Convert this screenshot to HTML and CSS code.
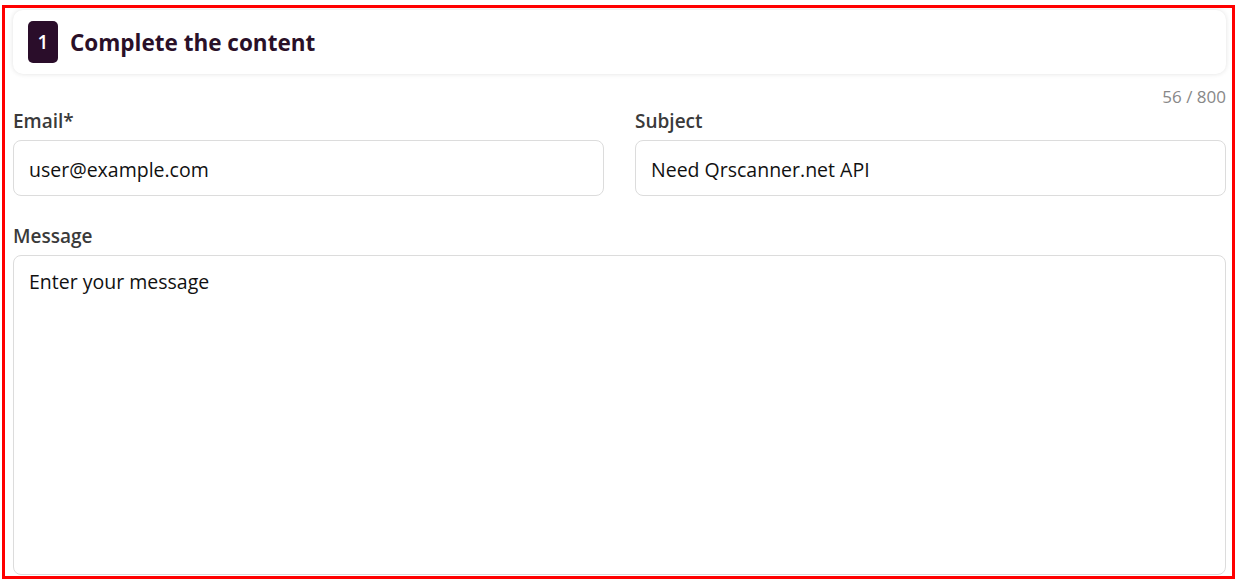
FILE: index.html
```html
<!DOCTYPE html>
<html lang="en">
<head>
  <meta charset="UTF-8">
  <title>Contact</title>
  <meta name="viewport" content="width=device-width, initial-scale=1">
  <link rel="stylesheet" href="styles.css">
</head>
<body>
  <div class="frame">
    <div class="step-card">
      <span class="step-num">1</span>
      <h2>Complete the content</h2>
    </div>
    <div class="counter">56 / 800</div>
    <div class="row">
      <div class="field">
        <label for="email">Email*</label>
        <input type="text" id="email" value="user@example.com">
      </div>
      <div class="field">
        <label for="subject">Subject</label>
        <input type="text" id="subject" value="Need Qrscanner.net API">
      </div>
    </div>
    <div class="field">
      <label for="message">Message</label>
      <textarea id="message" placeholder="Enter your message"></textarea>
    </div>
  </div>
</body>
</html>
```

FILE: styles.css
```css
* {
  box-sizing: border-box;
  font-family: 'Open Sans', sans-serif;
}
body {
  margin: 0;
  background: #fff;
  color: #333;
}
.frame {
  margin: 5px 2px 0 2px;
  height: 574px;
  border: 3px solid #ff0000;
  padding: 2px 6px 0 8px;
  overflow: hidden;
}
.step-card {
  display: flex;
  align-items: center;
  gap: 12px;
  height: 64px;
  padding: 0 15px;
  background: #fff;
  border-radius: 10px;
  box-shadow: 0 0 5px rgba(0, 0, 0, 0.12);
}
.step-num {
  display: flex;
  align-items: center;
  justify-content: center;
  width: 30px;
  height: 42px;
  border-radius: 5px;
  background: #2a0d2a;
  color: #fff;
  font-size: 19px;
  font-weight: 600;
}
h2 {
  margin: 0;
  font-size: 22.5px;
  font-weight: 700;
  color: #2a1028;
}
.counter {
  text-align: right;
  margin-top: 10px;
  font-size: 17px;
  line-height: 25px;
  color: #888;
}
.row {
  display: grid;
  grid-template-columns: 1fr 1fr;
  gap: 31px;
}
.field {
  display: flex;
  flex-direction: column;
}
label {
  font-size: 19px;
  font-weight: 600;
  line-height: 24px;
  color: #3a3a3a;
  margin-bottom: 7px;
}
input, textarea {
  width: 100%;
  border: 1px solid #dcdcdc;
  border-radius: 8px;
  padding: 3px 15px 0;
  font-size: 19.5px;
  color: #111;
  background: #fff;
  outline: none;
}
input {
  height: 56px;
  margin-bottom: 28px;
}
textarea {
  height: 320px;
  padding-top: 12px;
  resize: none;
}
textarea::placeholder {
  color: #111;
  opacity: 1;
}
```
